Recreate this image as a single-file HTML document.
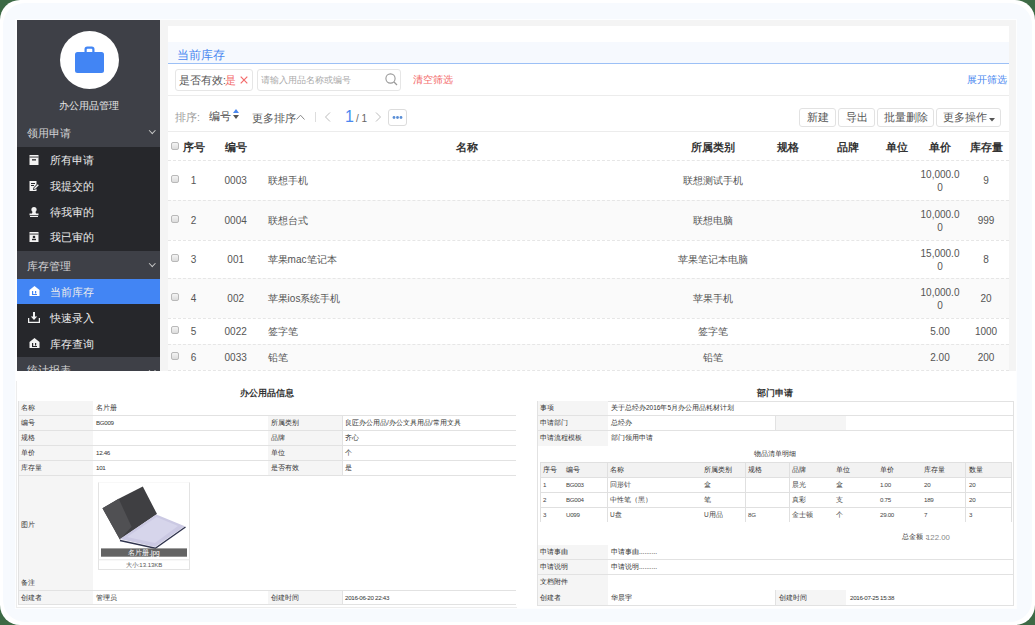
<!DOCTYPE html>
<html><head><meta charset="utf-8">
<style>
*{margin:0;padding:0;box-sizing:border-box}
html,body{width:1035px;height:625px;overflow:hidden;white-space:nowrap;background:#3d6a45;font-family:"Liberation Sans",sans-serif}
.a{position:absolute}
#frame{position:absolute;left:0;top:0;width:1035px;height:625px;background:#fff;border-radius:20px;overflow:hidden}
#inner{position:absolute;left:3px;top:3px;width:1029px;height:619px;background:#f7fafe;border-radius:22px}
/* sidebar */
#side{position:absolute;left:17px;top:20px;width:143px;height:351px;background:#3e4047;overflow:hidden;color:#e6e6e6}
.sub{position:absolute;left:0;width:143px;background:#26272b}
.grp{position:absolute;left:10px;font-size:10.5px;color:#d4d4d6;line-height:12px}
.chev{position:absolute;left:133px;width:4.5px;height:4.5px;border-right:1.4px solid #c8c8c8;border-bottom:1.4px solid #c8c8c8;transform:rotate(45deg)}
.item{position:absolute;left:33px;font-size:10.5px;color:#ececec;line-height:12px}
.ic{position:absolute;left:12px;width:9px;height:10px}
/* main */
#main{position:absolute;left:160px;top:20px;width:856px;height:351px;background:#f4f4f4;overflow:hidden}
#panel{position:absolute;left:8px;top:6px;width:841px;height:345px;background:#fff}
.t{position:absolute;white-space:nowrap;line-height:12px}
.btn{position:absolute;height:19px;border:1px solid #e2e2e2;border-radius:3px;font-size:10.5px;color:#555;text-align:center;line-height:17px;background:#fff}
.row{position:absolute;left:0;width:841px;border-bottom:1px dashed #e4e4e4}
.cb{position:absolute;left:3px;width:8px;height:8px;border:1px solid #b9b9b9;border-radius:2px;background:linear-gradient(#f4f4f4,#dcdcdc)}
.td{position:absolute;font-size:10px;color:#555;text-align:center;line-height:13px;white-space:nowrap}
.th{position:absolute;font-size:10.5px;color:#333;font-weight:bold;text-align:center;line-height:12px;white-space:nowrap}
/* bottom */
.bp{position:absolute;background:#fff}
.kv{position:absolute;font-size:7px;color:#3a3a3a;line-height:8px;white-space:nowrap}
.lb{position:absolute;background:#f5f5f5}
.hl{position:absolute;height:1px;background:#e3e3e3}
.vl{position:absolute;width:1px;background:#e3e3e3}
.z{font-size:1.3em;letter-spacing:.02em;line-height:0;vertical-align:-.08em;-webkit-text-stroke:.035em}
.cjk .z{font-size:inherit;letter-spacing:normal;line-height:inherit;vertical-align:baseline;-webkit-text-stroke:0}
</style></head><body>
<div id="frame"><div id="inner"></div></div>
<div class="a" style="left:15px;top:19px;width:1002px;height:590px;background:#fdfeff"></div>

<!-- SIDEBAR -->
<div id="side">
  <div class="a" style="left:43px;top:11px;width:59px;height:58px;border-radius:50%;background:#fff"></div>
  <svg class="a" style="left:58px;top:26px" width="29" height="28" viewBox="0 0 29 28">
    <path d="M9.5 6 V3.2 Q9.5 0.5 12.2 0.5 H16.8 Q19.5 0.5 19.5 3.2 V6 H17.3 V3.6 Q17.3 2.7 16.4 2.7 H12.6 Q11.7 2.7 11.7 3.6 V6 Z" fill="#4285f4"/>
    <rect x="0" y="6" width="29" height="21" rx="2.5" fill="#4285f4"/>
  </svg>
  <div class="t" style="left:42px;top:80px;font-size:10.1px;color:#e8e8e8"><span class="z">办公用品管理</span></div>

  <div class="grp" style="top:107px"><span class="z">领用申请</span></div>
  <div class="chev" style="top:108px"></div>
  <div class="sub" style="top:127px;height:104px"></div>
  <div class="item" style="top:134px"><span class="z">所有申请</span></div>
  <div class="item" style="top:160px"><span class="z">我提交的</span></div>
  <div class="item" style="top:186px"><span class="z">待我审的</span></div>
  <div class="item" style="top:211px"><span class="z">我已审的</span></div>

  <div class="grp" style="top:240px"><span class="z">库存管理</span></div>
  <div class="chev" style="top:241px"></div>
  <div class="sub" style="top:259px;height:78px"></div>
  <div class="a" style="left:0;top:259px;width:143px;height:25px;background:#4285f4"></div>
  <div class="item" style="top:266px"><span class="z">当前库存</span></div>
  <div class="item" style="top:292px"><span class="z">快速录入</span></div>
  <div class="item" style="top:318px"><span class="z">库存查询</span></div>
  <svg class="a" style="left:12px;top:135px" width="10" height="10" viewBox="0 0 10 10"><rect x="0.5" y="0" width="9" height="10" fill="#f2f2f2"/><rect x="0.5" y="1.6" width="9" height="0.9" fill="#26272b"/><rect x="3" y="4.2" width="4" height="1.3" fill="#26272b"/></svg>
  <svg class="a" style="left:12px;top:161px" width="10" height="10" viewBox="0 0 10 10"><path d="M0.5 0 H7.5 V3.5 L4.5 6.5 L4 9 L6.5 8.5 L7.5 7.5 V10 H0.5Z" fill="#f2f2f2"/><rect x="2" y="2" width="4" height="1" fill="#26272b"/><rect x="2" y="4" width="3" height="1" fill="#26272b"/><path d="M5 8 L5.3 6.7 L8.8 3.2 L9.8 4.2 L6.3 7.7Z" fill="#f2f2f2"/></svg>
  <svg class="a" style="left:12px;top:187px" width="10" height="10" viewBox="0 0 10 10"><circle cx="5" cy="2.6" r="2.6" fill="#f2f2f2"/><path d="M3.6 4.5 H6.4 L7 6.4 H9.5 V8.2 H0.5 V6.4 H3Z" fill="#f2f2f2"/><rect x="1" y="9" width="8" height="1" fill="#f2f2f2"/></svg>
  <svg class="a" style="left:12px;top:212px" width="10" height="10" viewBox="0 0 10 10"><rect x="0.5" y="0" width="9" height="10" fill="#f2f2f2"/><rect x="0.5" y="1.6" width="9" height="0.9" fill="#26272b"/><circle cx="5" cy="5" r="1.3" fill="#26272b"/><rect x="3" y="6.8" width="4" height="1.4" fill="#26272b"/></svg>
  <svg class="a" style="left:12px;top:266px" width="11" height="10" viewBox="0 0 11 10"><path d="M5.5 0 L10.5 4 V10 H0.5 V4Z" fill="#fff"/><rect x="3" y="5" width="1.2" height="4" fill="#4285f4"/><rect x="3" y="8" width="5" height="1" fill="#4285f4"/><rect x="6" y="5" width="1.2" height="2.5" fill="#4285f4"/></svg>
  <svg class="a" style="left:11px;top:292px" width="12" height="11" viewBox="0 0 12 11"><path d="M5 0 H7 V4.5 H9.2 L6 8 L2.8 4.5 H5Z" fill="#f2f2f2"/><path d="M0.6 6 V10.4 H11.4 V6" fill="none" stroke="#f2f2f2" stroke-width="1.3"/></svg>
  <svg class="a" style="left:12px;top:318px" width="11" height="10" viewBox="0 0 11 10"><path d="M5.5 0 L10.5 4 V10 H0.5 V4Z" fill="#f2f2f2"/><rect x="3" y="5" width="1.2" height="4" fill="#26272b"/><rect x="3" y="8" width="5" height="1" fill="#26272b"/><rect x="6" y="5" width="1.2" height="2.5" fill="#26272b"/></svg>
  <div class="grp" style="top:344px"><span class="z">统计报表</span></div>
  <div class="chev" style="top:348px"></div>
</div>

<!-- MAIN -->
<div id="main"><div id="panel">
  <div class="a" style="left:0;top:16px;width:841px;height:22px;background:#f6f9fe;border-bottom:1px solid #9cc0f6"></div>
  <div class="t" style="left:9px;top:22.5px;font-size:11.5px;color:#4a88f0"><span class="z">当前库存</span></div>
  <!-- filter row -->
  <div class="a" style="left:7px;top:43px;width:78px;height:22px;border:1px solid #e6e6e6;border-radius:3px"></div>
  <div class="t" style="left:11px;top:48px;font-size:10.5px;color:#555"><span class="z">是否有效</span>:</div>
  <div class="t" style="left:57px;top:48px;font-size:10.5px;color:#f36a6a"><span class="z">是</span></div>
  <svg class="a" style="left:72px;top:50px" width="8" height="8" viewBox="0 0 8 8"><path d="M0.7 0.7 L7.3 7.3 M7.3 0.7 L0.7 7.3" stroke="#f36a6a" stroke-width="1.2"/></svg>
  <div class="a" style="left:89px;top:43px;width:144px;height:22px;border:1px solid #e6e6e6;border-radius:3px"></div>
  <div class="t" style="left:93px;top:48px;font-size:9px;color:#aaa"><span class="z">请输入用品名称或编号</span></div>
  <svg class="a" style="left:217px;top:47px" width="13" height="13" viewBox="0 0 13 13"><circle cx="5.5" cy="5.5" r="4.6" fill="none" stroke="#999" stroke-width="1.1"/><path d="M9 9 L12 12" stroke="#999" stroke-width="1.2"/></svg>
  <div class="t" style="left:245px;top:48px;font-size:10px;color:#f36a6a"><span class="z">清空筛选</span></div>
  <div class="t" style="left:799px;top:48px;font-size:9.5px;color:#4a88f0"><span class="z">展开筛选</span></div>
  <div class="a" style="left:0;top:69px;width:841px;height:1px;background:#ececec"></div>
  <!-- sort row -->
  <div class="t" style="left:7px;top:85px;font-size:10.5px;color:#999"><span class="z">排序</span>:</div>
  <div class="t" style="left:41px;top:84px;font-size:10.5px;color:#444"><span class="z">编号</span></div>
  <svg class="a" style="left:65px;top:82px" width="6" height="12" viewBox="0 0 6 12"><path d="M0 5 L3 1 L6 5Z" fill="#4a88f0"/><path d="M0 7 L3 11 L6 7Z" fill="#555"/></svg>
  <div class="t" style="left:84px;top:86px;font-size:10.5px;color:#555"><span class="z">更多排序</span></div>
  <svg class="a" style="left:128px;top:88px" width="9" height="6" viewBox="0 0 9 6"><path d="M0.5 5.5 L4.5 1.2 L8.5 5.5" fill="none" stroke="#888" stroke-width="1"/></svg>
  <div class="a" style="left:147px;top:86px;width:1px;height:10px;background:#ddd"></div>
  <svg class="a" style="left:156px;top:86px" width="7" height="10" viewBox="0 0 7 10"><path d="M6 0.5 L1.5 5 L6 9.5" fill="none" stroke="#bbb" stroke-width="1"/></svg>
  <div class="t" style="left:177px;top:83px;font-size:16px;line-height:16px;color:#4a88f0">1</div>
  <div class="t" style="left:188px;top:87px;font-size:10px;color:#666">/ 1</div>
  <svg class="a" style="left:207px;top:86px" width="7" height="10" viewBox="0 0 7 10"><path d="M1 0.5 L5.5 5 L1 9.5" fill="none" stroke="#bbb" stroke-width="1"/></svg>
  <div class="a" style="left:220px;top:83px;width:19px;height:17px;border:1px solid #dcdcdc;border-radius:3px"></div>
  <svg class="a" style="left:224px;top:89px" width="11" height="5" viewBox="0 0 11 5"><circle cx="2" cy="2.5" r="1.4" fill="#5b8fd6"/><circle cx="5.5" cy="2.5" r="1.4" fill="#5b8fd6"/><circle cx="9" cy="2.5" r="1.4" fill="#5b8fd6"/></svg>
  <div class="btn" style="left:631px;top:82px;width:37px"><span class="z">新建</span></div>
  <div class="btn" style="left:670px;top:82px;width:37px"><span class="z">导出</span></div>
  <div class="btn" style="left:709px;top:82px;width:57px"><span class="z">批量删除</span></div>
  <div class="btn" style="left:768px;top:82px;width:65px;text-align:left;padding-left:6px"><span class="z">更多操作</span></div>
  <svg class="a" style="left:821px;top:92px" width="6" height="4" viewBox="0 0 6 4"><path d="M0 0 H6 L3 3.5Z" fill="#555"/></svg>
  <div class="a" style="left:0;top:105px;width:841px;height:1px;background:#ececec"></div>
  <!-- table -->
  <div class="cb" style="top:116.0px"></div>
  <div class="th" style="left:-19.5px;top:114.5px;width:90px"><span class="z">序号</span></div>
  <div class="th" style="left:22.7px;top:114.5px;width:90px"><span class="z">编号</span></div>
  <div class="th" style="left:254.0px;top:114.5px;width:90px"><span class="z">名称</span></div>
  <div class="th" style="left:500.0px;top:114.5px;width:90px"><span class="z">所属类别</span></div>
  <div class="th" style="left:575.0px;top:114.5px;width:90px"><span class="z">规格</span></div>
  <div class="th" style="left:635.0px;top:114.5px;width:90px"><span class="z">品牌</span></div>
  <div class="th" style="left:684.0px;top:114.5px;width:90px"><span class="z">单位</span></div>
  <div class="th" style="left:727.0px;top:114.5px;width:90px"><span class="z">单价</span></div>
  <div class="th" style="left:773.0px;top:114.5px;width:90px"><span class="z">库存量</span></div>
  <div class="a" style="left:0;top:134px;width:841px;height:40px;background:#fff"></div>
  <div class="cb" style="top:149.0px"></div>
  <div class="td" style="left:-19.5px;top:148.0px;width:90px">1</div>
  <div class="td" style="left:22.7px;top:148.0px;width:90px">0003</div>
  <div class="td" style="left:99.6px;top:148.0px;text-align:left"><span class="z">联想手机</span></div>
  <div class="td" style="left:500.0px;top:148.0px;width:90px"><span class="z">联想测试手机</span></div>
  <div class="td" style="left:727px;top:141.5px;width:90px">10,000.0<br>0</div>
  <div class="td" style="left:773.0px;top:148.0px;width:90px">9</div>
  <div class="a" style="left:0;top:174px;width:841px;height:40px;background:#fafafa"></div>
  <div class="cb" style="top:189.0px"></div>
  <div class="td" style="left:-19.5px;top:188.0px;width:90px">2</div>
  <div class="td" style="left:22.7px;top:188.0px;width:90px">0004</div>
  <div class="td" style="left:99.6px;top:188.0px;text-align:left"><span class="z">联想台式</span></div>
  <div class="td" style="left:500.0px;top:188.0px;width:90px"><span class="z">联想电脑</span></div>
  <div class="td" style="left:727px;top:181.5px;width:90px">10,000.0<br>0</div>
  <div class="td" style="left:773.0px;top:188.0px;width:90px">999</div>
  <div class="a" style="left:0;top:214px;width:841px;height:38px;background:#fff"></div>
  <div class="cb" style="top:228.0px"></div>
  <div class="td" style="left:-19.5px;top:227.0px;width:90px">3</div>
  <div class="td" style="left:22.7px;top:227.0px;width:90px">001</div>
  <div class="td" style="left:99.6px;top:227.0px;text-align:left"><span class="z">苹果</span>mac<span class="z">笔记本</span></div>
  <div class="td" style="left:500.0px;top:227.0px;width:90px"><span class="z">苹果笔记本电脑</span></div>
  <div class="td" style="left:727px;top:220.5px;width:90px">15,000.0<br>0</div>
  <div class="td" style="left:773.0px;top:227.0px;width:90px">8</div>
  <div class="a" style="left:0;top:252px;width:841px;height:40px;background:#fafafa"></div>
  <div class="cb" style="top:267.0px"></div>
  <div class="td" style="left:-19.5px;top:266.0px;width:90px">4</div>
  <div class="td" style="left:22.7px;top:266.0px;width:90px">002</div>
  <div class="td" style="left:99.6px;top:266.0px;text-align:left"><span class="z">苹果</span>ios<span class="z">系统手机</span></div>
  <div class="td" style="left:500.0px;top:266.0px;width:90px"><span class="z">苹果手机</span></div>
  <div class="td" style="left:727px;top:259.5px;width:90px">10,000.0<br>0</div>
  <div class="td" style="left:773.0px;top:266.0px;width:90px">20</div>
  <div class="a" style="left:0;top:292px;width:841px;height:26px;background:#fff"></div>
  <div class="cb" style="top:300.0px"></div>
  <div class="td" style="left:-19.5px;top:299.0px;width:90px">5</div>
  <div class="td" style="left:22.7px;top:299.0px;width:90px">0022</div>
  <div class="td" style="left:99.6px;top:299.0px;text-align:left"><span class="z">签字笔</span></div>
  <div class="td" style="left:500.0px;top:299.0px;width:90px"><span class="z">签字笔</span></div>
  <div class="td" style="left:727.0px;top:299.0px;width:90px">5.00</div>
  <div class="td" style="left:773.0px;top:299.0px;width:90px">1000</div>
  <div class="a" style="left:0;top:318px;width:841px;height:26px;background:#fafafa"></div>
  <div class="cb" style="top:326.0px"></div>
  <div class="td" style="left:-19.5px;top:325.0px;width:90px">6</div>
  <div class="td" style="left:22.7px;top:325.0px;width:90px">0033</div>
  <div class="td" style="left:99.6px;top:325.0px;text-align:left"><span class="z">铅笔</span></div>
  <div class="td" style="left:500.0px;top:325.0px;width:90px"><span class="z">铅笔</span></div>
  <div class="td" style="left:727.0px;top:325.0px;width:90px">2.00</div>
  <div class="td" style="left:773.0px;top:325.0px;width:90px">200</div>
  <div class="a" style="left:0;top:134px;width:841px;height:1px;border-top:1px dashed #e6e6e6"></div>
  <div class="a" style="left:0;top:174px;width:841px;height:1px;border-top:1px dashed #e6e6e6"></div>
  <div class="a" style="left:0;top:214px;width:841px;height:1px;border-top:1px dashed #e6e6e6"></div>
  <div class="a" style="left:0;top:252px;width:841px;height:1px;border-top:1px dashed #e6e6e6"></div>
  <div class="a" style="left:0;top:292px;width:841px;height:1px;border-top:1px dashed #e6e6e6"></div>
  <div class="a" style="left:0;top:318px;width:841px;height:1px;border-top:1px dashed #e6e6e6"></div>
  <div class="a" style="left:0;top:344px;width:841px;height:1px;border-top:1px dashed #e6e6e6"></div>
</div></div>

<!-- BOTTOM -->
<div class="bp" style="left:16px;top:371px;width:1000px;height:237px"></div>
<div class="a" style="left:16px;top:381px;width:1px;height:227px;background:#ededed"></div>
<div class="a" style="left:16px;top:607px;width:501px;height:1px;background:#ededed"></div>
<div class="kv" style="left:207.0px;top:388.0px;width:120px;text-align:center;font-size:9px;line-height:10px;color:#333;font-weight:bold"><span class="z">办公用品信息</span></div>
<div class="lb" style="left:18px;top:401px;width:75px;height:203px;background:#f5f5f5"></div>
<div class="lb" style="left:268px;top:415px;width:74px;height:15px;background:#f5f5f5"></div>
<div class="lb" style="left:268px;top:430px;width:74px;height:15px;background:#f5f5f5"></div>
<div class="lb" style="left:268px;top:445px;width:74px;height:15px;background:#f5f5f5"></div>
<div class="lb" style="left:268px;top:460px;width:74px;height:15px;background:#f5f5f5"></div>
<div class="lb" style="left:268px;top:590px;width:74px;height:14px;background:#f5f5f5"></div>
<div class="hl" style="left:18px;top:415px;width:498px;background:#e2e2e2"></div>
<div class="hl" style="left:18px;top:430px;width:498px;background:#e2e2e2"></div>
<div class="hl" style="left:18px;top:445px;width:498px;background:#e2e2e2"></div>
<div class="hl" style="left:18px;top:460px;width:498px;background:#e2e2e2"></div>
<div class="hl" style="left:18px;top:475px;width:498px;background:#e2e2e2"></div>
<div class="hl" style="left:18px;top:590px;width:498px;background:#e2e2e2"></div>
<div class="hl" style="left:18px;top:604px;width:498px;background:#e2e2e2"></div>
<div class="vl" style="left:18px;top:401px;height:204px;background:#e2e2e2"></div>
<div class="vl" style="left:342px;top:415px;height:60px;background:#e2e2e2"></div>
<div class="vl" style="left:342px;top:590px;height:14px;background:#e2e2e2"></div>
<div class="kv" style="left:21px;top:404.0px;font-size:6.5px;color:#333"><span class="z">名称</span></div>
<div class="kv" style="left:96px;top:404.0px;font-size:6.5px;color:#333"><span class="z">名片册</span></div>
<div class="kv" style="left:21px;top:418.5px;font-size:6.5px;color:#333"><span class="z">编号</span></div>
<div class="kv" style="left:96px;top:418.5px;font-size:6.2px;letter-spacing:-.3px;color:#333">BG009</div>
<div class="kv" style="left:271px;top:418.5px;font-size:6.5px;color:#333"><span class="z">所属类别</span></div>
<div class="kv" style="left:345px;top:418.5px;font-size:6.5px;color:#333"><span class="z">良匠办公用品</span>/<span class="z">办公文具用品</span>/<span class="z">常用文具</span></div>
<div class="kv" style="left:21px;top:433.5px;font-size:6.5px;color:#333"><span class="z">规格</span></div>
<div class="kv" style="left:271px;top:433.5px;font-size:6.5px;color:#333"><span class="z">品牌</span></div>
<div class="kv" style="left:345px;top:433.5px;font-size:6.5px;color:#333"><span class="z">齐心</span></div>
<div class="kv" style="left:21px;top:448.5px;font-size:6.5px;color:#333"><span class="z">单价</span></div>
<div class="kv" style="left:96px;top:448.5px;font-size:6.2px;letter-spacing:-.3px;color:#333">12.46</div>
<div class="kv" style="left:271px;top:448.5px;font-size:6.5px;color:#333"><span class="z">单位</span></div>
<div class="kv" style="left:345px;top:448.5px;font-size:6.5px;color:#333"><span class="z">个</span></div>
<div class="kv" style="left:21px;top:463.5px;font-size:6.5px;color:#333"><span class="z">库存量</span></div>
<div class="kv" style="left:96px;top:463.5px;font-size:6.2px;letter-spacing:-.3px;color:#333">101</div>
<div class="kv" style="left:271px;top:463.5px;font-size:6.5px;color:#333"><span class="z">是否有效</span></div>
<div class="kv" style="left:345px;top:463.5px;font-size:6.5px;color:#333"><span class="z">是</span></div>
<div class="kv" style="left:21px;top:521.0px;font-size:6.5px;color:#333"><span class="z">图片</span></div>
<div class="kv" style="left:21px;top:579.0px;font-size:6.5px;color:#333"><span class="z">备注</span></div>
<div class="kv" style="left:21px;top:593.5px;font-size:6.5px;color:#333"><span class="z">创建者</span></div>
<div class="kv" style="left:96px;top:593.5px;font-size:6.5px;color:#333"><span class="z">管理员</span></div>
<div class="kv" style="left:271px;top:593.5px;font-size:6.5px;color:#333"><span class="z">创建时间</span></div>
<div class="kv" style="left:345px;top:593.5px;font-size:6.2px;letter-spacing:-.3px;color:#333">2016-06-20 22:43</div>
<div class="a" style="left:98px;top:482px;width:92px;height:88px;border:1px solid #e3e3e3;border-top-color:#f8f8f8;background:#fff"></div>
<svg class="a" style="left:98px;top:482px" width="92" height="88" viewBox="98 482 92 88">
<polygon points="102.5,508.3 118.7,498.8 142.8,486.5 157,514 119.9,539.6" fill="#3f3f42"/>
<polygon points="102.5,508.3 118.7,498.8 131.6,526.8 119.9,539.6" fill="#505053"/>
<polygon points="119.9,539.1 156.3,514.5 184.8,526.3 155.1,547" fill="#cbc9e3"/>
<polygon points="127,537 156.5,517 178,526 155,543" fill="#d6d5eb"/>
<polyline points="120,540.5 155.3,548.3 185.5,527" fill="none" stroke="#30344f" stroke-width="1.4"/>
<rect x="101" y="548.4" width="86" height="8.3" fill="#636363"/>
<line x1="98" y1="559.8" x2="190" y2="559.8" stroke="#e6e6e6" stroke-width="1"/>
</svg>
<div class="kv" style="left:84.0px;top:548.6px;width:120px;text-align:center;font-size:6.5px;line-height:8px;color:#fff;"><span class="z">名片册</span>.jpg</div>
<div class="kv" style="left:84.0px;top:560.5px;width:120px;text-align:center;font-size:6px;line-height:8px;color:#555;"><span class="z">大小</span>:13.13KB</div>
<div class="kv" style="left:715.0px;top:387.5px;width:120px;text-align:center;font-size:9px;line-height:10px;color:#333;font-weight:bold"><span class="z">部门申请</span></div>
<div class="hl" style="left:537px;top:401px;width:476px;background:#e2e2e2"></div>
<div class="vl" style="left:537px;top:401px;height:205px;background:#e2e2e2"></div>
<div class="vl" style="left:1013px;top:401px;height:205px;background:#e2e2e2"></div>
<div class="lb" style="left:538px;top:401px;width:70px;height:45px;background:#f5f5f5"></div>
<div class="lb" style="left:538px;top:545px;width:70px;height:60px;background:#f5f5f5"></div>
<div class="lb" style="left:776px;top:416px;width:70px;height:15px;background:#f5f5f5"></div>
<div class="lb" style="left:776px;top:590px;width:70px;height:15px;background:#f5f5f5"></div>
<div class="hl" style="left:537px;top:415px;width:477px;background:#e2e2e2"></div>
<div class="hl" style="left:537px;top:430px;width:477px;background:#e2e2e2"></div>
<div class="hl" style="left:537px;top:559px;width:477px;background:#e2e2e2"></div>
<div class="hl" style="left:537px;top:574px;width:477px;background:#e2e2e2"></div>
<div class="hl" style="left:537px;top:605px;width:477px;background:#e2e2e2"></div>
<div class="vl" style="left:775px;top:415px;height:16px;background:#e2e2e2"></div>
<div class="vl" style="left:775px;top:590px;height:15px;background:#e2e2e2"></div>
<div class="kv" style="left:540px;top:404.0px;font-size:6.5px;color:#333"><span class="z">事项</span></div>
<div class="kv" style="left:611px;top:404.0px;font-size:6.5px;color:#333"><span class="z">关于总经办</span>2016<span class="z">年</span>5<span class="z">月办公用品耗材计划</span></div>
<div class="kv" style="left:540px;top:419.0px;font-size:6.5px;color:#333"><span class="z">申请部门</span></div>
<div class="kv" style="left:611px;top:419.0px;font-size:6.5px;color:#333"><span class="z">总经办</span></div>
<div class="kv" style="left:540px;top:434.0px;font-size:6.5px;color:#333"><span class="z">申请流程模板</span></div>
<div class="kv" style="left:611px;top:434.0px;font-size:6.5px;color:#333"><span class="z">部门领用申请</span></div>
<div class="kv" style="left:715.0px;top:450.0px;width:120px;text-align:center;font-size:6.5px;line-height:8px;color:#333;"><span class="z">物品清单明细</span></div>
<div class="lb" style="left:540px;top:462px;width:471px;height:15px;background:#f2f2f2"></div>
<div class="hl" style="left:540px;top:462px;width:471px;background:#e0e0e0"></div>
<div class="hl" style="left:540px;top:477px;width:471px;background:#e0e0e0"></div>
<div class="hl" style="left:540px;top:492px;width:471px;background:#e0e0e0"></div>
<div class="hl" style="left:540px;top:507px;width:471px;background:#e0e0e0"></div>
<div class="vl" style="left:540px;top:462px;height:60px;background:#e0e0e0"></div>
<div class="vl" style="left:607px;top:462px;height:60px;background:#e0e0e0"></div>
<div class="vl" style="left:745px;top:462px;height:60px;background:#e0e0e0"></div>
<div class="vl" style="left:789px;top:462px;height:60px;background:#e0e0e0"></div>
<div class="vl" style="left:965px;top:462px;height:60px;background:#e0e0e0"></div>
<div class="vl" style="left:1011px;top:462px;height:60px;background:#e0e0e0"></div>
<div class="kv" style="left:543px;top:465.5px;font-size:6.5px;color:#333"><span class="z">序号</span></div>
<div class="kv" style="left:566px;top:465.5px;font-size:6.5px;color:#333"><span class="z">编号</span></div>
<div class="kv" style="left:610px;top:465.5px;font-size:6.5px;color:#333"><span class="z">名称</span></div>
<div class="kv" style="left:704px;top:465.5px;font-size:6.5px;color:#333"><span class="z">所属类别</span></div>
<div class="kv" style="left:748px;top:465.5px;font-size:6.5px;color:#333"><span class="z">规格</span></div>
<div class="kv" style="left:792px;top:465.5px;font-size:6.5px;color:#333"><span class="z">品牌</span></div>
<div class="kv" style="left:836px;top:465.5px;font-size:6.5px;color:#333"><span class="z">单位</span></div>
<div class="kv" style="left:880px;top:465.5px;font-size:6.5px;color:#333"><span class="z">单价</span></div>
<div class="kv" style="left:924px;top:465.5px;font-size:6.5px;color:#333"><span class="z">库存量</span></div>
<div class="kv" style="left:969px;top:465.5px;font-size:6.5px;color:#333"><span class="z">数量</span></div>
<div class="kv" style="left:543px;top:480.5px;font-size:6.2px;letter-spacing:-.3px;color:#444">1</div>
<div class="kv" style="left:566px;top:480.5px;font-size:6.2px;letter-spacing:-.3px;color:#444">BG003</div>
<div class="kv" style="left:610px;top:480.5px;font-size:6.5px;color:#444"><span class="z">回形针</span></div>
<div class="kv" style="left:704px;top:480.5px;font-size:6.5px;color:#444"><span class="z">盒</span></div>
<div class="kv" style="left:792px;top:480.5px;font-size:6.5px;color:#444"><span class="z">晨光</span></div>
<div class="kv" style="left:836px;top:480.5px;font-size:6.5px;color:#444"><span class="z">盒</span></div>
<div class="kv" style="left:880px;top:480.5px;font-size:6.2px;letter-spacing:-.3px;color:#444">1.00</div>
<div class="kv" style="left:924px;top:480.5px;font-size:6.2px;letter-spacing:-.3px;color:#444">20</div>
<div class="kv" style="left:969px;top:480.5px;font-size:6.2px;letter-spacing:-.3px;color:#444">20</div>
<div class="kv" style="left:543px;top:495.5px;font-size:6.2px;letter-spacing:-.3px;color:#444">2</div>
<div class="kv" style="left:566px;top:495.5px;font-size:6.2px;letter-spacing:-.3px;color:#444">BG004</div>
<div class="kv" style="left:610px;top:495.5px;font-size:6.5px;color:#444"><span class="z">中性笔（黑）</span></div>
<div class="kv" style="left:704px;top:495.5px;font-size:6.5px;color:#444"><span class="z">笔</span></div>
<div class="kv" style="left:792px;top:495.5px;font-size:6.5px;color:#444"><span class="z">真彩</span></div>
<div class="kv" style="left:836px;top:495.5px;font-size:6.5px;color:#444"><span class="z">支</span></div>
<div class="kv" style="left:880px;top:495.5px;font-size:6.2px;letter-spacing:-.3px;color:#444">0.75</div>
<div class="kv" style="left:924px;top:495.5px;font-size:6.2px;letter-spacing:-.3px;color:#444">189</div>
<div class="kv" style="left:969px;top:495.5px;font-size:6.2px;letter-spacing:-.3px;color:#444">20</div>
<div class="kv" style="left:543px;top:510.5px;font-size:6.2px;letter-spacing:-.3px;color:#444">3</div>
<div class="kv" style="left:566px;top:510.5px;font-size:6.2px;letter-spacing:-.3px;color:#444">U099</div>
<div class="kv" style="left:610px;top:510.5px;font-size:6.5px;color:#444">U<span class="z">盘</span></div>
<div class="kv" style="left:704px;top:510.5px;font-size:6.5px;color:#444">U<span class="z">用品</span></div>
<div class="kv" style="left:748px;top:510.5px;font-size:6.2px;letter-spacing:-.3px;color:#444">8G</div>
<div class="kv" style="left:792px;top:510.5px;font-size:6.5px;color:#444"><span class="z">金士顿</span></div>
<div class="kv" style="left:836px;top:510.5px;font-size:6.5px;color:#444"><span class="z">个</span></div>
<div class="kv" style="left:880px;top:510.5px;font-size:6.2px;letter-spacing:-.3px;color:#444">29.00</div>
<div class="kv" style="left:924px;top:510.5px;font-size:6.2px;letter-spacing:-.3px;color:#444">7</div>
<div class="kv" style="left:969px;top:510.5px;font-size:6.2px;letter-spacing:-.3px;color:#444">3</div>
<div class="kv" style="left:902px;top:533.0px;font-size:6.5px;color:#333"><span class="z">总金额：</span></div>
<div class="kv" style="left:926px;top:532.5px;font-size:7.8px;color:#888;line-height:9px">122.00</div>
<div class="kv" style="left:540px;top:548.0px;font-size:6.5px;color:#333"><span class="z">申请事由</span></div>
<div class="kv" style="left:611px;top:548.0px;font-size:6.5px;color:#333"><span class="z">申请事由</span>..........</div>
<div class="kv" style="left:540px;top:563.0px;font-size:6.5px;color:#333"><span class="z">申请说明</span></div>
<div class="kv" style="left:611px;top:563.0px;font-size:6.5px;color:#333"><span class="z">申请说明</span>..........</div>
<div class="kv" style="left:540px;top:578.0px;font-size:6.5px;color:#333"><span class="z">文档附件</span></div>
<div class="kv" style="left:540px;top:593.5px;font-size:6.5px;color:#333"><span class="z">创建者</span></div>
<div class="kv" style="left:611px;top:593.5px;font-size:6.5px;color:#333"><span class="z">华晨宇</span></div>
<div class="kv" style="left:779px;top:593.5px;font-size:6.5px;color:#333"><span class="z">创建时间</span></div>
<div class="kv" style="left:850px;top:593.5px;font-size:6.2px;letter-spacing:-.3px;color:#333">2016-07-25 15:38</div>

<script>
(function(){var d=document.createElement('span');d.style.cssText='position:absolute;left:-9999px;top:0;font-size:100px;line-height:1;white-space:nowrap;font-family:"Liberation Sans",sans-serif';d.textContent='\u4e2d\u6587\u5b57\u4f53';document.body.appendChild(d);var w=d.getBoundingClientRect().width;document.body.removeChild(d);if(w>350)document.body.classList.add('cjk');})();
</script>
</body></html>
